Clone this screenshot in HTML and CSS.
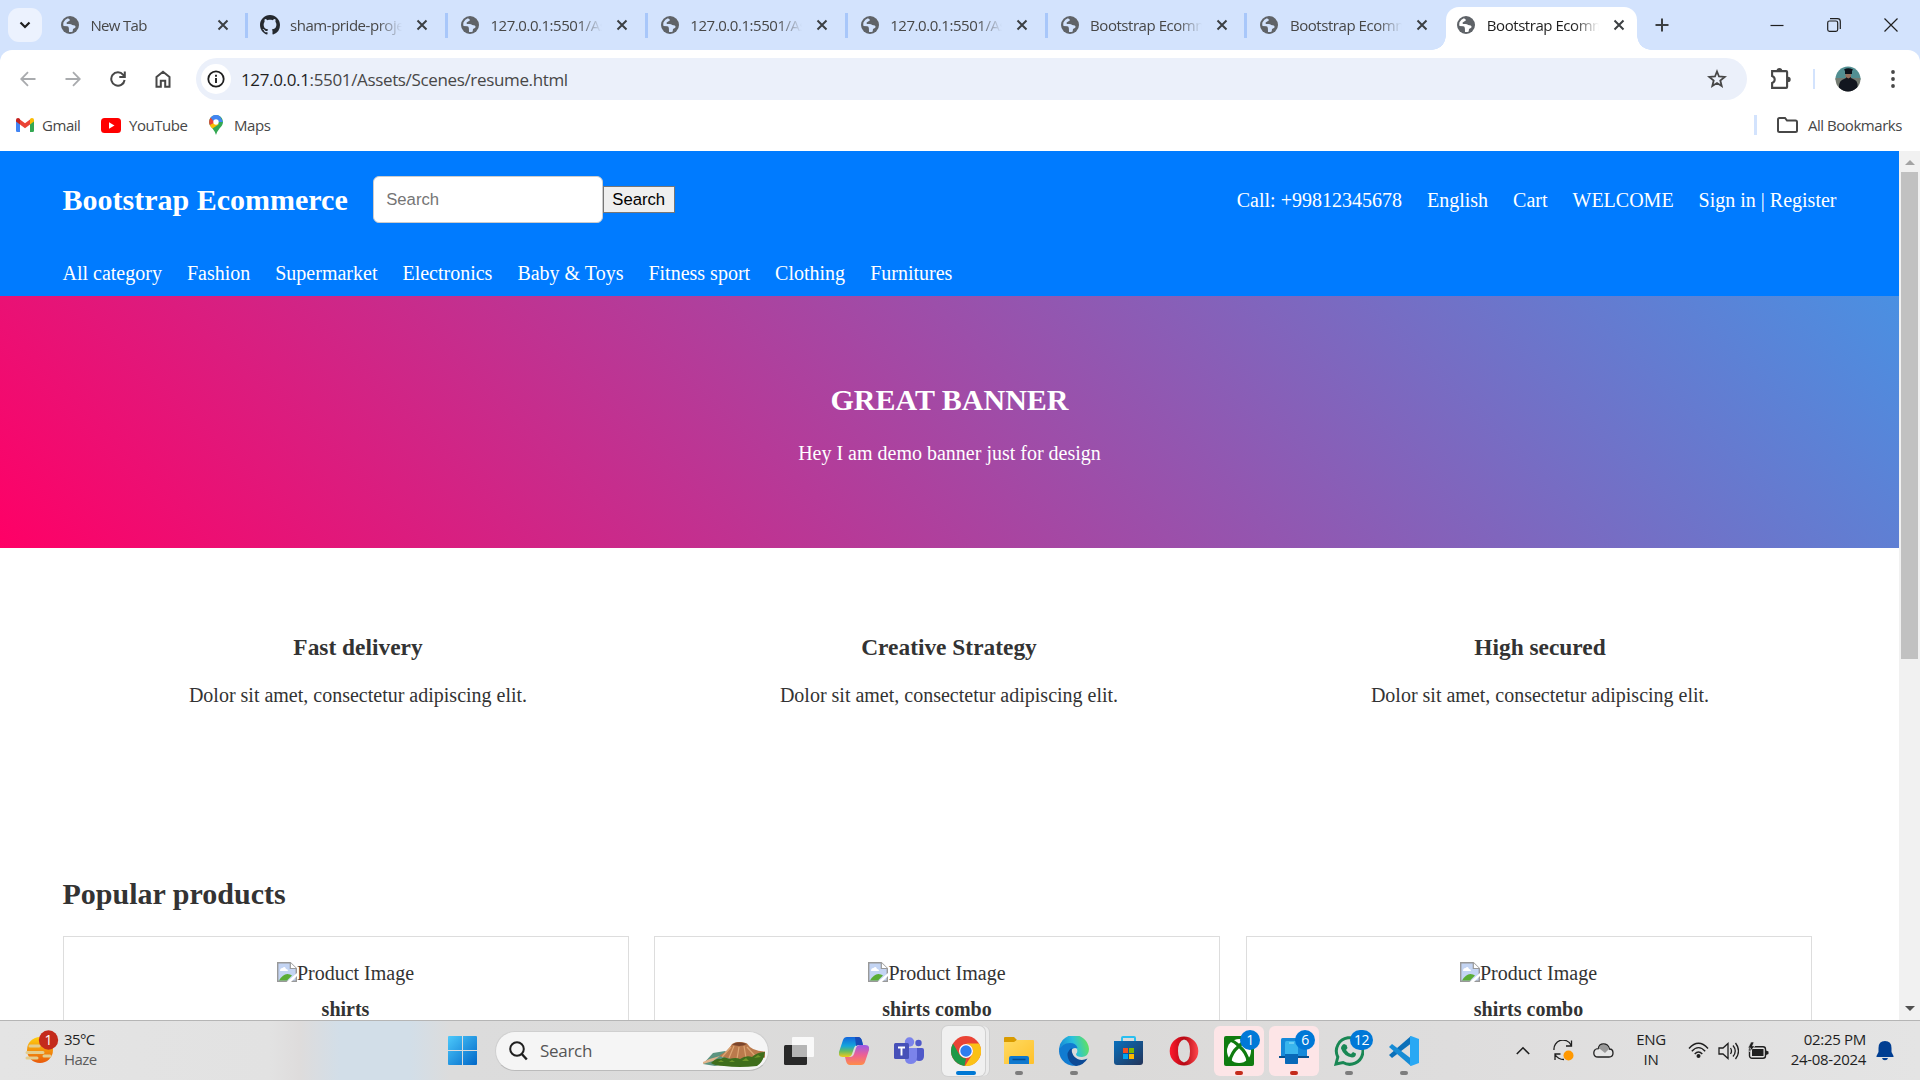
FILE: index.html
```html
<!DOCTYPE html>
<html lang="en">
<head>
<meta charset="utf-8">
<title>Bootstrap Ecommerce</title>
<link rel="stylesheet" href="styles.css">
</head>
<body>
<svg class="defs" width="0" height="0">
  <symbol id="globe" viewBox="0 0 18 18"><circle cx="9" cy="9" r="9" fill="#5f6368"/><path d="M7 2.200Q4 3 2.400 6.500Q2 9 2.600 10l3.600.3q1.600.1 1.700 2.100l.1 3.600q2 .4 3.700-.5l.3-2.500 2.300-1.300q.7-1.600-.6-2.100l-2.500-.5q-1-1.400-3.400-1.200l-2 .1-.2-1.500 2.400-1.400 1.200-1.200z" fill="#d3e3fd"/><path d="M10.500 2.500l.2 2.400q1.300 1.500 2.900.4l1-1q1.500 2 1.500 4.700l-3-.3-3.200-1.500-2-.3 1.200-1.700z" fill="#5f6368"/></symbol>
  <symbol id="globe-active" viewBox="0 0 18 18"><circle cx="9" cy="9" r="9" fill="#5f6368"/><path d="M7 2.200Q4 3 2.400 6.500Q2 9 2.600 10l3.600.3q1.600.1 1.700 2.100l.1 3.600q2 .4 3.700-.5l.3-2.500 2.300-1.300q.7-1.600-.6-2.100l-2.500-.5q-1-1.400-3.400-1.200l-2 .1-.2-1.500 2.400-1.400 1.200-1.200z" fill="#fff"/></symbol>
  <symbol id="close" viewBox="0 0 12 12"><path d="M1.500 1.500l9 9m0-9l-9 9" stroke="#3c4043" stroke-width="2" fill="none"/></symbol>
  <symbol id="broken" viewBox="0 0 20 20"><path d="M.7.700h12.600L19.300 6.500v12.800H.7z" fill="#c3d4f3" stroke="#999" stroke-width="1.400"/><path d="M3 9q0-3 2.500-3Q8 3.500 9 7q2 0 2 2z" fill="#fff"/><path d="M2 18.500Q7 10 13 12.500l2 1-5 5z" fill="#5aad35"/><path d="M9.500 20l10.500-9v3l-6 6z" fill="#fff"/><path d="M13.300.7v5.800h6" fill="#fff" stroke="#999" stroke-width="1.200"/></symbol>
</svg>
<div class="tabs">
  <div class="tab-menu"><svg width="12" height="8" viewBox="0 0 12 8"><path d="M1.500 1.500L6 6l4.500-4.500" fill="none" stroke="#1f1f1f" stroke-width="2.200"/></svg></div>
  <div class="tab first"><svg class="fav"><use href="#globe"/></svg><span>New Tab</span><svg class="x"><use href="#close"/></svg></div>
  <div class="tab"><svg class="fav gh" viewBox="0 0 16 16"><path fill="#24292f" d="M8 0C3.580 0 0 3.580 0 8c0 3.540 2.290 6.530 5.470 7.590.4.070.55-.17.55-.38 0-.19-.01-.82-.01-1.490-2.010.37-2.530-.49-2.690-.94-.09-.23-.48-.94-.82-1.130-.28-.15-.68-.52-.01-.53.63-.01 1.080.58 1.230.82.72 1.210 1.870.87 2.330.66.070-.52.28-.87.51-1.070-1.780-.2-3.640-.89-3.640-3.950 0-.87.31-1.590.82-2.150-.08-.2-.36-1.020.08-2.120 0 0 .67-.21 2.200.82.64-.18 1.320-.27 2-.27s1.360.09 2 .27c1.530-1.040 2.200-.82 2.200-.82.44 1.100.16 1.920.08 2.120.51.56.82 1.270.82 2.150 0 3.070-1.870 3.750-3.650 3.950.29.25.54.73.54 1.480 0 1.070-.01 1.930-.01 2.200 0 .21.15.46.55.38A8.010 8.010 0 0016 8c0-4.420-3.580-8-8-8z"/></svg><span>sham-pride-project</span><svg class="x"><use href="#close"/></svg></div>
  <div class="tab"><svg class="fav"><use href="#globe"/></svg><span>127.0.0.1:5501/Assets</span><svg class="x"><use href="#close"/></svg></div>
  <div class="tab"><svg class="fav"><use href="#globe"/></svg><span>127.0.0.1:5501/Assets</span><svg class="x"><use href="#close"/></svg></div>
  <div class="tab"><svg class="fav"><use href="#globe"/></svg><span>127.0.0.1:5501/Assets</span><svg class="x"><use href="#close"/></svg></div>
  <div class="tab"><svg class="fav"><use href="#globe"/></svg><span>Bootstrap Ecommerce</span><svg class="x"><use href="#close"/></svg></div>
  <div class="tab"><svg class="fav"><use href="#globe"/></svg><span>Bootstrap Ecommerce</span><svg class="x"><use href="#close"/></svg></div>
  <div class="tab active"><svg class="fav"><use href="#globe-active"/></svg><span>Bootstrap Ecommerce</span><svg class="x"><use href="#close"/></svg></div>
  <svg class="plus" width="14" height="14" viewBox="0 0 14 14"><path d="M7 .5v13M.5 7h13" stroke="#3c4043" stroke-width="2"/></svg>
  <div class="window-buttons">
    <svg width="14" height="14" viewBox="0 0 14 14"><path d="M.5 7.500h13" stroke="#1f1f1f" stroke-width="1.200"/></svg>
    <svg width="14" height="14" viewBox="0 0 14 14"><rect x=".7" y="3" width="10" height="10.300" rx="1.800" fill="none" stroke="#1f1f1f" stroke-width="1.200"/><path d="M3 .7h7.500q2.800 0 2.800 2.800V11" fill="none" stroke="#1f1f1f" stroke-width="1.200"/></svg>
    <svg width="14" height="14" viewBox="0 0 14 14"><path d="M.5.500l13 13m0-13l-13 13" stroke="#1f1f1f" stroke-width="1.200"/></svg>
  </div>
</div>
<div class="chrome-body">
<div class="toolbar">
  <div class="nav">
    <svg width="16" height="16" viewBox="0 0 16 16"><path d="M15.500 8H1.500M8 1.200L1.200 8 8 14.800" fill="none" stroke="#a9abae" stroke-width="1.800"/></svg>
    <svg width="16" height="16" viewBox="0 0 16 16"><path d="M.5 8h14M8 1.200L14.800 8 8 14.800" fill="none" stroke="#a9abae" stroke-width="1.800"/></svg>
    <svg width="16" height="16" viewBox="0 0 16 16"><path d="M14.600 9A6.700 6.700 0 1 1 13.200 3.800L14.500 5.300M14.800.500V6H9.300" fill="none" stroke="#474747" stroke-width="2"/></svg>
    <svg width="16" height="18" viewBox="0 0 16 18"><path d="M1.500 16.800V7L8 1.800 14.500 7v9.800H10.200v-6H5.800v6z" fill="none" stroke="#474747" stroke-width="2"/></svg>
  </div>
  <div class="omnibox">
    <div class="info"><svg width="18" height="18" viewBox="0 0 18 18"><circle cx="9" cy="9" r="7.700" fill="none" stroke="#1f1f1f" stroke-width="1.800"/><path d="M9 8v5M9 4.800v1.900" stroke="#1f1f1f" stroke-width="1.900"/></svg></div>
    <span class="url"><b>127.0.0.1</b>:5501/Assets/Scenes/resume.html</span>
    <svg class="star" width="20" height="20" viewBox="0 0 20 20"><path d="M10 2.500l2 5 5.700.4-4.400 3.600 1.400 5.500L10 14l-4.700 3 1.400-5.500-4.400-3.600L8 7.500z" fill="none" stroke="#474747" stroke-width="1.800"/></svg>
  </div>
  <svg class="puzzle" width="22" height="21" viewBox="0 0 22 21"><path d="M2.100 3.100h14q1 0 1 1v14.800q0 1-1 1h-14v-5q2.600-1 2.600-3.400T2.100 8z" fill="none" stroke="#474747" stroke-width="2.100"/><path d="M6.600 2.500a2.800 2.500 0 0 1 5.600 0zM18 8.700a2.700 2.700 0 0 1 0 5.400z" fill="#474747"/></svg>
  <i class="rule"></i>
  <svg class="avatar" width="26" height="26" viewBox="0 0 26 26"><defs><clipPath id="round"><circle cx="13" cy="13" r="12.500"/></clipPath></defs><g clip-path="url(#round)"><path fill="#528f92" d="M0 0h26v14H0z"/><path fill="#747b72" d="M0 12h26v14H0z"/><path fill="#12161f" d="M4 26q-1-10 3-12l4-2V9h5v3l4 2q4 2 2 12z"/><path fill="#95715f" d="M10.500 7h5.500v4l-2.500 1.500-3-1.500z"/><path fill="#0c1119" d="M9 3.500q4-2.500 9 0L17 5v3h-7V5z"/></g></svg>
  <svg class="dots" width="4" height="18" viewBox="0 0 4 18"><g fill="#474747"><circle cx="2" cy="2" r="1.900"/><circle cx="2" cy="9" r="1.900"/><circle cx="2" cy="16" r="1.900"/></g></svg>
</div>
<div class="bookmarks">
  <svg width="18" height="14" viewBox="0 0 18 14"><path fill="#4285f4" d="M0 2v10.700Q0 14 1.300 14H4V5z"/><path fill="#34a853" d="M18 2v10.700Q18 14 16.700 14H14V5z"/><path fill="#ea4335" d="M4 1.500l5 3.800 5-3.800v5l-5 3.800-5-3.800z"/><path fill="#c5221f" d="M0 2q0-2 2-2 1 0 2 1v5.500L0 3.500z"/><path fill="#fbbc04" d="M18 2q0-2-2-2-1 0-2 1v5.500l4-3z"/></svg><span class="b1">Gmail</span>
  <svg width="20" height="15" viewBox="0 0 20 15"><rect width="20" height="15" rx="3.500" fill="red"/><path d="M8 4.300v6.400l5.500-3.200z" fill="#fff"/></svg><span class="b2">YouTube</span>
  <svg width="14" height="20" viewBox="0 0 14 20"><path fill="#34a853" d="M0 7a7 7 0 0 1 14 0q0 3-3.500 6.500Q8 16.500 7 20 6 16.500 3.500 13.500 0 10 0 7z"/><path fill="#fbbc04" d="M.8 10L7 3l2.500 6.500-6 4Q1.500 11.500.8 10z"/><path fill="#ea4335" d="M1.700 2.500L7 7 .8 10Q-.8 6 1.700 2.500z"/><path fill="#4285f4" d="M1.700 2.500Q6-2 11 1.300L6 8zM11 1.300L14 7H7z"/><circle cx="7" cy="7" r="2.700" fill="#fff"/></svg><span class="b3">Maps</span>
  <i class="rule"></i>
  <svg class="folder" width="21" height="16" viewBox="0 0 21 16"><path d="M1 13.500v-11Q1 1 2.500 1H8l2 2.500h8.500Q20 3.500 20 5v8.500q0 1.500-1.500 1.500h-16Q1 15 1 13.500z" fill="none" stroke="#474747" stroke-width="2"/></svg><span class="b4">All Bookmarks</span>
</div>
</div>

<div class="viewport">
  <main class="page">
    <header>
      <div class="top">
        <h1>Bootstrap Ecommerce</h1>
        <input type="text" placeholder="Search"><button>Search</button>
        <nav class="account"><a>Call: +99812345678</a><a>English</a><a>Cart</a><a>WELCOME</a><a>Sign in | Register</a></nav>
      </div>
      <nav class="categories"><a>All category</a><a>Fashion</a><a>Supermarket</a><a>Electronics</a><a>Baby &amp; Toys</a><a>Fitness sport</a><a>Clothing</a><a>Furnitures</a></nav>
    </header>
    <section class="banner"><h2>GREAT BANNER</h2><p>Hey I am demo banner just for design</p></section>
    <section class="features">
      <div><h3>Fast delivery</h3><p>Dolor sit amet, consectetur adipiscing elit.</p></div>
      <div><h3>Creative Strategy</h3><p>Dolor sit amet, consectetur adipiscing elit.</p></div>
      <div><h3>High secured</h3><p>Dolor sit amet, consectetur adipiscing elit.</p></div>
    </section>
    <section class="products">
      <h2>Popular products</h2>
      <div class="grid">
        <article><div class="pic"><svg><use href="#broken"/></svg>Product Image</div><h4>shirts</h4></article>
        <article><div class="pic"><svg><use href="#broken"/></svg>Product Image</div><h4>shirts combo</h4></article>
        <article><div class="pic"><svg><use href="#broken"/></svg>Product Image</div><h4>shirts combo</h4></article>
      </div>
    </section>
  </main>
  <div class="scrollbar"><i class="up"></i><i class="thumb"></i><i class="down"></i></div>
</div>

<footer class="taskbar">
  <div class="weather">
    <svg width="34" height="36" viewBox="0 0 34 36"><defs><linearGradient id="sun" x2="0" y2="1"><stop stop-color="#ffcf10"/><stop offset="1" stop-color="#e8590c"/></linearGradient></defs><circle cx="15" cy="20" r="13" fill="url(#sun)"/><g stroke="#e3cd8f" stroke-width="3" stroke-linecap="round"><path d="M5 16h9M2 22.500h16M2 28h10M19 26h6"/></g><circle cx="23.500" cy="10" r="9.700" fill="#c42b1c"/><text x="23.500" y="15" text-anchor="middle" font-size="14" fill="#fff">1</text></svg>
    <div><p>35°C</p><p class="dim">Haze</p></div>
  </div>
  <svg class="start" width="29" height="29" viewBox="0 0 29 29"><defs><linearGradient id="win" x2="1" y2="1"><stop stop-color="#4cc9fb"/><stop offset="1" stop-color="#0067c8"/></linearGradient></defs><path fill="url(#win)" d="M1 0h13v14H0V1Q0 0 1 0zM15 0h13q1 0 1 1v13H15zM0 15h14v14H1q-1 0-1-1zM15 15h14v13q0 1-1 1H15z"/></svg>
  <div class="search">
    <svg width="19" height="20" viewBox="0 0 19 20"><circle cx="8" cy="8" r="6.800" fill="none" stroke="#1f1f1f" stroke-width="2"/><path d="M12.800 13l5 5.500" stroke="#1f1f1f" stroke-width="2.400"/></svg><span>Search</span>
    <svg class="hill" width="62" height="25" viewBox="0 0 62 25"><path fill="#5c9480" d="M0 22l10-11 12-2 10 10-20 5z"/><path fill="#bb7a4c" d="M16 14Q25 9 29 2q6-4 15-.5 5 8 18 8v6L40 20z"/><path fill="#7b452c" d="M29 2.500q6-4 15-.5-7 3.500-15 .5z"/><path d="M31 4l-5 12M36 5l-2 12M41 4l2 12M44 5l9 10M28 5l-9 10" stroke="#dda673" stroke-width="1.200"/><path fill="#3f6e1c" d="M8 21q5-5 10-4 3-3 8 0 7-2 11 0 6-4 12-2 5-5 13-5-1 9-8 14-18 2-33 0-9 0-13-3z"/><path fill="#6d962b" d="M15 20l3-2 3 2zM26 20l3-2 3 2zM39 19l4-3 3 3zM51 16l4-3 3 2z"/><path fill="#e0b38b" d="M0 20q8-4 17-6l-7 5-10 3z"/></svg>
  </div>
  <div class="apps">
    <div class="app"><svg width="30" height="30" viewBox="0 0 30 30"><rect y="9" width="23" height="20" rx="1.500" fill="#292929"/><path d="M9 1h20q1 0 1 1v18q0 1-1 1H8V2q0-1 1-1z" fill="#fff" opacity=".82"/><path d="M8 9h15v12H8z" fill="#aaa" opacity=".75"/></svg></div>
    <div class="app"><svg width="30" height="28" viewBox="0 0 30 28"><defs><linearGradient id="cop1" x2="0" y2="1"><stop stop-color="#1265dc"/><stop offset=".45" stop-color="#15a5dc"/><stop offset=".7" stop-color="#62bb65"/><stop offset="1" stop-color="#f1cb19"/></linearGradient><linearGradient id="cop2" x2="0" y2="1"><stop stop-color="#9a5ae8"/><stop offset=".5" stop-color="#ed6094"/><stop offset="1" stop-color="#ff8d48"/></linearGradient></defs><path fill="url(#cop1)" d="M8 0h11q3 0 4 4l1 4h-5q-3 0-4 3l-2 6q-1 3-4 3H4q-5 0-4-5L4 3q1-3 4-3z"/><path fill="url(#cop2)" d="M22 28H11q-3 0-4-4l-1-4h5q3 0 4-3l2-6q1-3 4-3h5q5 0 4 5l-4 12q-1 3-4 3z"/><path d="M16 0h3q3 0 4 4l1 4h-5l-2 1z" fill="#194bb8"/></svg></div>
    <div class="app"><svg width="30" height="28" viewBox="0 0 30 28"><circle cx="15.500" cy="5" r="4.700" fill="#7b83eb"/><circle cx="24.500" cy="6" r="3.200" fill="#5059c9"/><path d="M20 11h8q2 0 2 2v6q0 5-5 5-3 0-5-2z" fill="#5059c9"/><path d="M11 11h12v9q0 7-6 7t-6-5z" fill="#7b83eb"/><rect y="6" width="15" height="16" rx="1.500" fill="#4650b8"/><path d="M4 10.500h7M7.500 10.500v8" stroke="#fff" stroke-width="1.900"/></svg></div>
    <div class="app current"><svg width="30" height="30" viewBox="0 0 30 30"><circle cx="15" cy="15" r="15" fill="#ea4335"/><path fill="#1e9a48" d="M2 7.500l6.500 11.300Q11 22.500 15 22.500l-1.500 7.400A15 15 0 0 1 2 7.500z"/><path fill="#fbc116" d="M28 7.500H15q7 1.500 7 7.500 0 2-1 3.800L14 30A15 15 0 0 0 28 7.500z"/><circle cx="15" cy="15" r="7" fill="#fff"/><circle cx="15" cy="15" r="5.700" fill="#2d7df0"/></svg><i class="run wide"></i></div>
    <div class="app"><svg width="30" height="27" viewBox="0 0 30 27"><defs><linearGradient id="fold" x2="1" y2="1"><stop stop-color="#ffda61"/><stop offset="1" stop-color="#ffc12b"/></linearGradient></defs><path fill="#d99b00" d="M0 1q0-1 1-1h9l3 3-3 4H0z"/><path fill="url(#fold)" d="M0 5h10l3-2h16q1 0 1 1v22q0 1-1 1H0z"/><path fill="#0f78ce" d="M5 27v-6q0-2 2-2h16q2 0 2 2v6z"/><path d="M8.500 22.500h13" stroke="#064d91" stroke-width="1.500"/></svg><i class="run"></i></div>
    <div class="app"><svg width="30" height="30" viewBox="0 0 30 30"><defs><linearGradient id="edge" x1="0" y1=".5" x2="1" y2=".3"><stop stop-color="#1688d7"/><stop offset=".5" stop-color="#2ac1dd"/><stop offset="1" stop-color="#66e455"/></linearGradient></defs><path fill="url(#edge)" d="M0 15A15 15 0 0 1 30 13q0 7-7 8-6 0-6-3 2-2 1-5Q12 8 0 15z"/><path fill="#117bd1" d="M0 15Q3 7 11 7q6 0 7.500 5-7-1-6.500 6 1 8 7 11.300A15 15 0 0 1 0 15z"/><path fill="#0c4a96" d="M12.500 12Q7 16 9 22q2 6 8 8 8-1 11.500-7.500-5 2.500-10 .5-6-3-6-11z"/></svg><i class="run"></i></div>
    <div class="app"><svg width="30" height="29" viewBox="0 0 30 29"><defs><linearGradient id="store" x2="1" y2="1"><stop stop-color="#0870bd"/><stop offset="1" stop-color="#233459"/></linearGradient></defs><path d="M8 6V2q0-1 1-1h11q1 0 1 1v4" fill="none" stroke="#29bff0" stroke-width="2"/><path d="M0 5h29v21q0 3-3 3H3q-3 0-3-3z" fill="url(#store)"/><path fill="#f25022" d="M9 12h5v5H9z"/><path fill="#7fba00" d="M15 12h5v5h-5z"/><path fill="#00a4ef" d="M9 18h5v5H9z"/><path fill="#ffb900" d="M15 18h5v5h-5z"/></svg></div>
    <div class="app"><svg width="30" height="30" viewBox="0 0 30 30"><defs><linearGradient id="op"><stop stop-color="#ff1b2d"/><stop offset=".5" stop-color="#b40713"/><stop offset="1" stop-color="#ff484c"/></linearGradient></defs><path fill="url(#op)" fill-rule="evenodd" d="M15 .5A14.300 14.500 0 1 0 15 29.500 14.300 14.500 0 0 0 15 .500zM15 3.500q6 1 6 11.500t-6 11.500Q9 25 9 15T15 3.500z"/></svg></div>
    <div class="app alert"><svg width="30" height="30" viewBox="0 0 30 30"><rect width="30" height="30" rx="2" fill="#107c10"/><circle cx="15" cy="15" r="12" fill="#fff"/><path d="M6 4q4 1 9 6 5-5 9-6M15 10Q7 17 6 25M15 10q8 7 9 15" fill="none" stroke="#107c10" stroke-width="3.200"/></svg><b class="badge">1</b><i class="run"></i></div>
    <div class="app alert"><svg width="30" height="30" viewBox="0 0 30 30"><rect x="2" y="2" width="26" height="20" rx="1.500" fill="#168ada"/><path d="M0 20h30v2H0z" fill="#06518f"/><rect x="6" y="5" width="13" height="23" rx="1.500" fill="#39b5ed"/><path d="M6 18h13v9q0 1-1 1H7q-1 0-1-1z" fill="#0869b8"/><path d="M10 7h5" stroke="#9be6fa"/></svg><b class="badge">6</b><i class="run"></i></div>
    <div class="app"><svg width="30" height="30" viewBox="0 0 30 30"><path d="M2 28l1.800-7A13.300 13.300 0 1 1 9 26.500z" fill="none" stroke="#198754" stroke-width="3"/><path d="M10 8l2.500 1 1 3-1.500 2q2 3 5 4l2-2 3 1.500q0 4-4 4-8-1-11-9 0-3 3-4.500z" fill="#198754"/></svg><b class="badge two">12</b><i class="run"></i></div>
    <div class="app"><svg width="30" height="30" viewBox="0 0 30 30"><path fill="#0b70b9" d="M0 19l3 3L22 7.500V0z"/><path fill="#168bd5" d="M0 11l3-3 19 14.500V30z"/><path fill="#29a8f4" d="M22 0l8 3v24l-8 3-1-1V1z"/></svg><i class="run"></i></div>
  </div>
  <div class="tray">
    <svg class="t1" width="14" height="9" viewBox="0 0 14 9"><path d="M.8 8L7 1.800 13.200 8" fill="none" stroke="#1f1f1f" stroke-width="1.600"/></svg>
    <svg class="t2" width="21" height="21" viewBox="0 0 21 21"><path d="M1 10A9 9 0 0 1 18 5M18.500.500V6H13M2 20v-6h5.500M2 14.500Q5 19.500 11 19.500" fill="none" stroke="#1f1f1f" stroke-width="1.300"/><circle cx="15.500" cy="15.500" r="5" fill="#ff9800"/></svg>
    <svg class="t3" width="21" height="15" viewBox="0 0 21 15"><path d="M5 14Q.8 14 .8 10t4.500-4.300Q6 1 10.500 1t6 5Q20 6 20 10t-4 4z" fill="#e5e5e5" stroke="#222" stroke-width="1.300"/><path d="M2 7q2-2 5-1l5 4 4-4Q15 1.500 10.500 1.500T6 6z" fill="#999"/></svg>
    <div class="lang">ENG<br>IN</div>
    <svg class="t4" width="21" height="17" viewBox="0 0 21 17"><g fill="none" stroke="#1f1f1f" stroke-width="1.400"><path d="M1 6.500Q10.500-4 20 6.500M3.800 9.300q6.700-7.300 13.400 0M6.700 12q3.800-4 7.600 0"/></g><circle cx="10.500" cy="14" r="2" fill="#1f1f1f"/></svg>
    <svg class="t5" width="21" height="18" viewBox="0 0 21 18"><path d="M1 6h4l5-4.500v15L5 12H1zM12.500 6q2 3 0 6M15 3.500q4.500 5.500 0 11M17.500 1q6 8 0 16" fill="none" stroke="#1f1f1f" stroke-width="1.300"/></svg>
    <svg class="t6" width="21" height="18" viewBox="0 0 21 18"><rect x="1.500" y="4.700" width="16" height="11.600" rx="2.500" fill="none" stroke="#1f1f1f" stroke-width="1.400"/><path d="M4 7h11.500v7H4zM18 8.500l2.500 1v2.500l-2.500 1z" fill="#1f1f1f"/><path d="M3 0L0 6h2.500L1.500 10 7 4H4.500L6 0z" fill="#1f1f1f" stroke="#e2e2e2" stroke-width=".6"/></svg>
    <div class="clock">02:25 PM<br>24-08-2024</div>
    <svg class="t7" width="18" height="20" viewBox="0 0 18 20"><path d="M9 0q6.500 0 6.500 7v4L17.500 15v1H.5v-1l2-4V7Q2.500 0 9 0zM6 17h6q-.5 2.300-3 2.300T6 17z" fill="#003e92"/></svg>
  </div>
</footer>
</body>
</html>
```
FILE: styles.css
```css
* { box-sizing: border-box; }
body { margin: 0; width: 1920px; height: 1080px; overflow: hidden; display: flex; flex-direction: column; background: #fff; font-family: "Open Sans", "Noto Sans", sans-serif; }
svg { flex: none; display: block; }
.defs { position: absolute; }
p, h1, h2, h3, h4 { margin: 0; }

.tabs { height: 50px; flex: none; background: #d3e3fd; display: flex; align-items: center; }
.tab-menu { width: 34px; height: 34px; margin: 0 9px 0 8px; border-radius: 11px; background: #ecf2fe; display: grid; place-items: center; }
.tab { width: 199.900px; height: 25px; flex: none; display: flex; align-items: center; padding-left: 13px; border-left: 3px solid #a8c7fa; font-size: 15px; letter-spacing: -.45px; color: #474747; }
.tab.first { width: 194px; border-color: transparent; padding-left: 7px; letter-spacing: -.7px; }
.fav { width: 18px; height: 22px; margin-right: 11.500px; }
.fav.gh { width: 20px; margin-left: -1px; margin-right: 10px; }
.tab span { width: 112px; overflow: hidden; white-space: nowrap; line-height: 25px; -webkit-mask-image: linear-gradient(90deg, #000 78%, transparent); mask-image: linear-gradient(90deg, #000 78%, transparent); }
.x { width: 12px; height: 12px; margin-left: 14px; }
.tab.active { width: 191px; height: 43px; align-self: flex-end; border: 0; background: #fff; border-radius: 13px 13px 0 0; padding: 0 0 7px 11px; margin-left: 2px; color: #1f1f1f; position: relative; }
.tab.active::before, .tab.active::after { content: ""; position: absolute; bottom: 0; width: 14px; height: 14px; }
.tab.active::before { left: -14px; background: radial-gradient(circle at 0 0, #d3e3fd 13.500px, #fff 14px); }
.tab.active::after { right: -14px; background: radial-gradient(circle at 100% 0, #d3e3fd 13.500px, #fff 14px); }
.plus { margin-left: 18px; }
.window-buttons { margin-left: auto; margin-right: 22px; display: flex; gap: 43px; }

.chrome-body { height: 101px; flex: none; background: linear-gradient(#d3e3fd 20px, #fff 20px); display: flex; flex-direction: column; }
.toolbar { height: 58px; flex: none; display: flex; align-items: center; padding-left: 20px; background: #fff; border-radius: 12px 12px 0 0; }
.nav { display: flex; gap: 29px; align-items: center; width: 176px; }
.omnibox { width: 1551px; height: 42px; border-radius: 21px; background: #ebf0fa; display: flex; align-items: center; padding-left: 5px; }
.info { width: 30px; height: 30px; border-radius: 50%; background: #fff; display: grid; place-items: center; margin-right: 10px; }
.url { font-size: 17px; letter-spacing: -.35px; color: #474747; white-space: nowrap; }
.url b { font-weight: 400; color: #1f1f1f; }
.star { margin-left: auto; margin-right: 20px; }
.puzzle { margin-left: 23px; margin-top: -2px; }
.rule { width: 2px; height: 20px; background: #d3e3fd; }
.toolbar .rule { margin-left: 21px; }
.avatar { margin-left: 20px; }
.dots { margin-left: 30px; }

.bookmarks { height: 43px; flex: none; display: flex; align-items: center; padding: 0 18px 9px 16px; font-size: 15px; color: #474747; white-space: nowrap; }
.bookmarks span { letter-spacing: -.45px; }
.b1 { margin-left: 8px; width: 59px; }
.b2 { margin-left: 8px; width: 80px; }
.b3 { margin-left: 11px; }
.bookmarks .rule { margin-left: auto; margin-right: 20px; width: 3px; }
.folder { margin-right: 10px; }

.viewport { height: 869px; flex: none; display: flex; overflow: hidden; }
.page { width: 1899px; font: 20px/23px "Liberation Serif", serif; color: #333; overflow: hidden; }
header { background: #007bff; color: #fff; height: 145px; padding: 25px 62.500px 0; }
.top { display: flex; align-items: center; height: 47px; }
.top h1 { font-size: 30px; line-height: 34px; margin-right: 25px; }
.top input { width: 230px; height: 47px; padding: 0 12.500px; border: 1px solid #ccc; border-radius: 6px; font: 16.700px "Liberation Sans", sans-serif; }
.top input::placeholder { color: #757575; }
.top button { height: 27px; width: 72px; padding: 0; border: 1px solid #767676; background: #efefef; color: #000; font: 16.700px "Liberation Sans", sans-serif; }
.account, .categories { display: flex; gap: 25px; white-space: nowrap; }
.account { margin-left: auto; padding-top: 1px; }
.categories { margin-top: 39px; }
.banner { height: 252px; background: linear-gradient(45deg, #ff0066, #4a90e2); color: #fff; text-align: center; padding-top: 86.500px; }
.banner h2 { font-size: 30px; line-height: 34px; margin-bottom: 25px; }
.features { display: grid; grid-template-columns: repeat(3, 566px); gap: 25px; padding: 86px 0 0 75px; text-align: center; height: 329px; }
.features h3 { font-size: 23.400px; line-height: 27px; margin-bottom: 23px; }
.products { padding: 0 62.500px; }
.products h2 { font-size: 30px; line-height: 34px; margin-bottom: 25px; }
.grid { display: grid; grid-template-columns: repeat(3, 566px); gap: 25.500px; text-align: center; }
article { border: 1px solid #ddd; height: 200px; padding-top: 25px; }
.pic { display: flex; justify-content: center; height: 23px; }
.pic svg { width: 20px; height: 20px; }
h4 { font-size: 20px; margin-top: 13px; }
.scrollbar { width: 21px; background: #f1f1f1; display: flex; flex-direction: column; align-items: center; padding: 9px 0 9px; }
.up, .down { border: 5px solid transparent; }
.up { border-top: 0; border-bottom-color: #a3a3a3; }
.down { border-bottom: 0; border-top-color: #505050; margin-top: auto; }
.thumb { width: 17px; height: 487px; background: #c1c1c1; margin-top: 7px; }

.taskbar { height: 60px; flex: none; border-top: 1px solid #b5b5b5; background: linear-gradient(90deg, #e4e4e4 0, #e2e2e2 270px, #dedcdc 300px, #d2dee8 340px, #d2dee8 410px, #dcdcdc 450px, #dbdad9 1100px, #dedddd 1450px, #e4e4e4 1920px); display: flex; align-items: center; font-size: 15px; line-height: 20px; color: #1f1f1f; }
.weather { display: flex; align-items: center; padding-left: 25px; width: 448px; letter-spacing: -.6px; }
.weather svg { margin-top: -6px; }
.weather div { margin: -4px 0 0 5px; }
.weather svg text { letter-spacing: 0; }
.dim { color: #5c5c5c; }
.start { margin-right: 18px; }
.search { width: 274px; height: 40px; border: 1px solid #cfcfcf; border-bottom-color: #bbb; border-radius: 20px; background: #f5f5f5; display: flex; align-items: center; padding-left: 13px; font-size: 17px; letter-spacing: -.3px; color: #555; }
.search span { margin-left: 12px; }
.hill { margin-left: auto; margin-right: 3px; margin-top: 8px; }
.apps { display: flex; gap: 5px; margin-left: 5px; }
.app { width: 50px; height: 50px; border-radius: 6px; display: grid; place-items: center; position: relative; }
.current { background: #f0f0f0; box-shadow: 0 0 0 1px #d0d0d0, 4px 0 0 0 #ebebeb, 5px 0 0 0 #d0d0d0; width: 43px; margin: 0 4px 0 3px; }
.current svg { margin-left: 4px; }
.alert { background: #fde5e7; }
.run { position: absolute; bottom: 1px; left: calc(50% - 4px); width: 8px; height: 4px; border-radius: 2px; background: #7d7d7d; }
.run.wide { width: 20px; left: calc(50% - 8px); background: #0078d4; }
.alert .run { background: #c42b1c; }
.badge { position: absolute; left: 26px; top: 4px; width: 20px; height: 20px; border-radius: 10px; background: #0078d7; color: #fff; font-weight: 400; font-size: 14px; text-align: center; letter-spacing: -.5px; }
.badge.two { width: 23px; }
.tray { margin-left: auto; display: flex; align-items: center; padding-right: 26px; letter-spacing: -.3px; white-space: nowrap; }
.t1 { margin-right: 23px; }
.t2 { margin-right: 19px; }
.t3 { margin-right: 22px; }
.lang { width: 30px; text-align: center; margin: -3px 22px 0 0; }
.t4 { margin-right: 9px; }
.t5 { margin-right: 9px; }
.clock { width: 79px; text-align: right; margin: -4px 10px 0 18px; display: flex; justify-content: flex-end; }
```
